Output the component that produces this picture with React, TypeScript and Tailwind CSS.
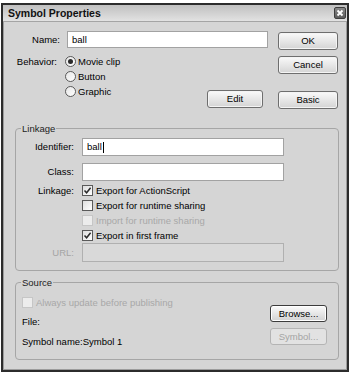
import React from "react";

const BG = "bg-[#d5d5d5]";

function Btn({
  children,
  w,
  h = "h-[18px]",
  disabled,
  focus,
}: {
  children: React.ReactNode;
  w: string;
  h?: string;
  disabled?: boolean;
  focus?: boolean;
}) {
  return (
    <div
      className={`${w} ${h} flex items-center justify-center rounded-[3px] border ${
        disabled
          ? "border-[#b4b4b4] text-[#a4a4a4] bg-[#e2e2e2]"
          : focus
          ? "border-[#3c3c3c] text-black bg-gradient-to-b from-[#fbfbfb] to-[#d2d2d2] shadow-[inset_0_0_0_1px_#ffffff]"
          : "border-[#6e6e6e] text-black bg-gradient-to-b from-[#fafafa] to-[#d4d4d4] shadow-[inset_0_0_0_1px_#f4f4f4]"
      }`}
    >
      {children}
    </div>
  );
}

function Radio({ checked, label }: { checked?: boolean; label: string }) {
  return (
    <div className="h-[15px] flex items-center gap-[2px]">
      <div className="w-[11px] h-[11px] rounded-full border border-[#5a5a5a] bg-gradient-to-br from-[#e6e6e6] to-[#ffffff] flex items-center justify-center">
        {checked && <div className="w-[5px] h-[5px] rounded-full bg-[#2a2a2a]" />}
      </div>
      <span>{label}</span>
    </div>
  );
}

function Check({
  checked,
  disabled,
  label,
}: {
  checked?: boolean;
  disabled?: boolean;
  label: string;
}) {
  return (
    <div className="h-[15px] flex items-center gap-[3px]">
      <div
        className={`w-[11px] h-[11px] border flex items-center justify-center ${
          disabled
            ? "border-[#c6c6c6] bg-[#ececec]"
            : "border-[#5a5a5a] bg-gradient-to-br from-[#dedede] to-[#ffffff]"
        }`}
      >
        {checked && (
          <svg width="9" height="9" viewBox="0 0 9 9">
            <path d="M1.5 4.5 L3.6 6.8 L7.6 1.8" fill="none" stroke="#2b2b2b" strokeWidth="1.5" />
          </svg>
        )}
      </div>
      <span className={disabled ? "text-[#a8a8a8]" : ""}>{label}</span>
    </div>
  );
}

function Field({
  children,
  w,
  h = "h-[18px]",
  disabled,
}: {
  children?: React.ReactNode;
  w: string;
  h?: string;
  disabled?: boolean;
}) {
  return (
    <div
      className={`${w} ${h} border flex items-center pl-[4px] ${
        disabled ? "border-[#b0b0b0] bg-[#d9d9d9]" : "border-[#a2a2a2] bg-white"
      }`}
    >
      {children}
    </div>
  );
}

function Group({
  title,
  children,
  className,
}: {
  title: string;
  children: React.ReactNode;
  className: string;
}) {
  return (
    <div className={`relative ml-[11px] w-[324px] border border-[#a6a6a6] rounded-[4px] ${className}`}>
      <span className={`absolute left-[5px] top-[-7px] px-[1px] leading-[13px] ${BG} text-[#222]`}>{title}</span>
      {children}
    </div>
  );
}

export default function App() {
  return (
    <div className="w-[350px] h-[374px] bg-white pt-[3px] pl-[1px] font-['Liberation_Sans',Arial,sans-serif] text-[9.5px] text-black leading-none">
      <div className={`w-[348px] h-[369px] border-2 border-[#2c2c2c] ${BG} flex flex-col`}>
        {/* Title bar */}
        <div className="h-[17px] shrink-0 flex items-center justify-between pl-[5px] pr-[1px] bg-gradient-to-b from-[#c0c0c0] to-[#e2e2e2] border-b border-[#a4a4a4]">
          <span className="font-bold text-[10.5px] text-[#111]">Symbol Properties</span>
          <div className="w-[12px] h-[12px] rounded-[2px] bg-gradient-to-b from-[#8a8a8a] to-[#5c5c5c] border border-[#3e3e3e] flex items-center justify-center">
            <svg width="8" height="8" viewBox="0 0 8 8">
              <path d="M1.5 1.5 L6.5 6.5 M6.5 1.5 L1.5 6.5" stroke="#ffffff" strokeWidth="1.8" />
            </svg>
          </div>
        </div>

        {/* Body */}
        <div className="flex-1 border-x border-b border-[#9c9c9c] flex flex-col">
          {/* Top section */}
          <div className="flex">
            <div className="w-[274px] flex flex-col">
              <div className="mt-[9px] flex items-center h-[17px]">
                <span className="w-[56px] text-right">Name:</span>
                <div className="ml-[7px]">
                  <Field w="w-[201px]" h="h-[17px]">ball</Field>
                </div>
              </div>
              <div className="mt-[6px] flex">
                <span className="w-[53px] text-right h-[15px] flex items-center justify-end">Behavior:</span>
                <div className="ml-[8px] flex flex-col">
                  <Radio checked label="Movie clip" />
                  <Radio label="Button" />
                  <Radio label="Graphic" />
                </div>
                <div className="ml-auto mr-[15px] mt-[36px]">
                  <Btn w="w-[56px]">Edit</Btn>
                </div>
              </div>
            </div>
            <div className="w-[60px] flex flex-col">
              <div className="mt-[10px]">
                <Btn w="w-[60px]">OK</Btn>
              </div>
              <div className="mt-[6px]">
                <Btn w="w-[60px]">Cancel</Btn>
              </div>
              <div className="mt-[17px]">
                <Btn w="w-[60px]">Basic</Btn>
              </div>
            </div>
          </div>

          {/* Linkage */}
          <Group title="Linkage" className="mt-[19px] pt-[9px] pb-[8px]">
            <div className="flex items-center">
              <span className="w-[58px] text-right">Identifier:</span>
              <div className="ml-[8px]">
                <Field w="w-[202px]">
                  ball<span className="inline-block w-[1px] h-[11px] bg-black ml-[1px]" />
                </Field>
              </div>
            </div>
            <div className="mt-[7px] flex items-center">
              <span className="w-[58px] text-right">Class:</span>
              <div className="ml-[8px]">
                <Field w="w-[202px]" />
              </div>
            </div>
            <div className="mt-[2px] flex">
              <span className="w-[58px] text-right h-[15px] flex items-center justify-end">Linkage:</span>
              <div className="ml-[8px] flex flex-col">
                <Check checked label="Export for ActionScript" />
                <Check label="Export for runtime sharing" />
                <Check disabled label="Import for runtime sharing" />
                <Check checked label="Export in first frame" />
              </div>
            </div>
            <div className="mt-[0px] flex items-center">
              <span className="w-[58px] text-right text-[#a4a4a4]">URL:</span>
              <div className="ml-[8px]">
                <Field w="w-[202px]" h="h-[19px]" disabled />
              </div>
            </div>
          </Group>

          {/* Source */}
          <Group title="Source" className="mt-[11px] pt-[12px] pb-[10px] pl-[6px] pr-[11px] flex">
            <div className="flex-1 flex flex-col">
              <Check disabled label="Always update before publishing" />
              <div className="mt-[5px] h-[14px] flex items-center">File:</div>
              <div className="mt-[6px] h-[14px] flex items-center">Symbol name:Symbol 1</div>
            </div>
            <div className="flex flex-col mt-[10px]">
              <Btn w="w-[57px]" h="h-[17px]" focus>
                Browse...
              </Btn>
              <div className="mt-[6px]">
                <Btn w="w-[57px]" h="h-[17px]" disabled>
                  Symbol...
                </Btn>
              </div>
            </div>
          </Group>
        </div>
      </div>
    </div>
  );
}
